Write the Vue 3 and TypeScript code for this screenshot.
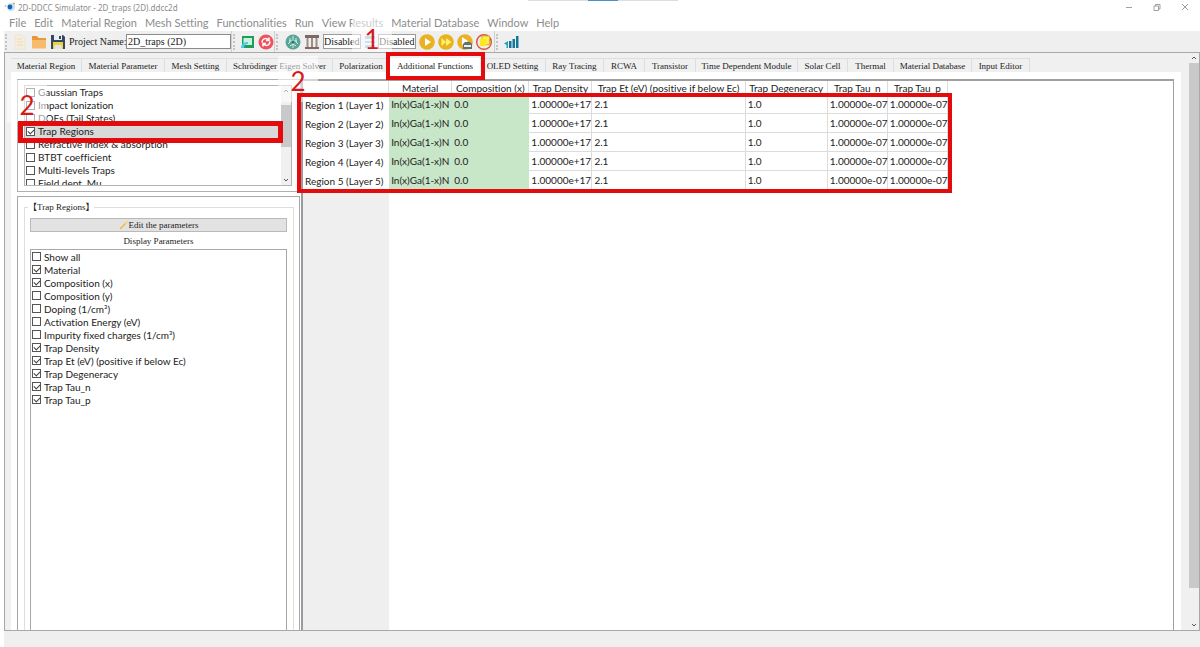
<script setup lang="ts">
import { ref } from 'vue'

interface CheckItem {
  label: string
  checked: boolean
}

const menus: string[] = [
  'File', 'Edit', 'Material Region', 'Mesh Setting', 'Functionalities',
  'Run', 'View Results', 'Material Database', 'Window', 'Help',
]

const tabs: string[] = [
  'Material Region', 'Material Parameter', 'Mesh Setting', 'Schrödinger Eigen Solver',
  'Polarization', 'Additional Functions', 'OLED Setting', 'Ray Tracing', 'RCWA',
  'Transistor', 'Time Dependent Module', 'Solar Cell', 'Thermal', 'Material Database',
  'Input Editor',
]
const activeTab = ref('Additional Functions')
const projectName = ref('2D_traps (2D)')

const features = ref<CheckItem[]>([
  { label: 'Gaussian Traps', checked: false },
  { label: 'Impact Ionization', checked: false },
  { label: 'DOEs (Tail States)', checked: false },
  { label: 'Trap Regions', checked: true },
  { label: 'Refractive index & absorption', checked: false },
  { label: 'BTBT coefficient', checked: false },
  { label: 'Multi-levels Traps', checked: false },
  { label: 'Field dept. Mu', checked: false },
])

const parameters = ref<CheckItem[]>([
  { label: 'Show all', checked: false },
  { label: 'Material', checked: true },
  { label: 'Composition (x)', checked: true },
  { label: 'Composition (y)', checked: false },
  { label: 'Doping (1/cm³)', checked: false },
  { label: 'Activation Energy (eV)', checked: false },
  { label: 'Impurity fixed charges (1/cm³)', checked: false },
  { label: 'Trap Density', checked: true },
  { label: 'Trap Et (eV) (positive if below Ec)', checked: true },
  { label: 'Trap Degeneracy', checked: true },
  { label: 'Trap Tau_n', checked: true },
  { label: 'Trap Tau_p', checked: true },
])

const columns: string[] = [
  'Material', 'Composition (x)', 'Trap Density', 'Trap Et (eV) (positive if below Ec)',
  'Trap Degeneracy', 'Trap Tau_n', 'Trap Tau_p',
]
const rows = [1, 2, 3, 4, 5].map((n) => ({
  name: `Region ${n} (Layer ${n})`,
  cells: ['In(x)Ga(1-x)N', '0.0', '1.00000e+17', '2.1', '1.0', '1.00000e-07', '1.00000e-07'],
}))
</script>

<template>
  <div class="window">
    <div class="top-handle"><i></i></div>
    <header class="titlebar">
      <svg class="app-icon" viewBox="0 0 12 12" aria-hidden="true">
        <circle cx="7" cy="6" r="4" fill="#bfe6f2" />
        <circle cx="6" cy="6" r="2.4" fill="#1d5fb4" />
        <circle cx="10" cy="2.5" r="1" fill="#e9a33c" />
        <circle cx="1.5" cy="5" r="1" fill="#b9c6d4" />
      </svg>
      <span class="title">2D-DDCC Simulator - 2D_traps (2D).ddcc2d</span>
      <div class="window-buttons">
        <button type="button" aria-label="Minimize">
          <svg viewBox="0 0 10 10"><path d="M2 5.500h6" /></svg>
        </button>
        <button type="button" aria-label="Restore">
          <svg viewBox="0 0 10 10"><path d="M2 4h4.500v4.500H2zM3.500 4V2.500H8V7H6.500" /></svg>
        </button>
        <button type="button" aria-label="Close">
          <svg viewBox="0 0 10 10"><path d="M2 2l6 6M8 2l-6 6" /></svg>
        </button>
      </div>
    </header>

    <nav class="menubar">
      <button v-for="m in menus" :key="m" type="button">{{ m }}</button>
    </nav>

    <div class="toolbar">
      <div class="group group-project">
        <button type="button" aria-label="New">
          <svg viewBox="0 0 16 16"><path d="M3 1h7l3 3v11H3z" fill="#f6eedb" stroke="#eee6d2" /><path d="M5 5h5M5 8h6M5 11h6" stroke="#e8dcc0" /></svg>
        </button>
        <button type="button" aria-label="Open">
          <svg viewBox="0 0 16 16"><path d="M1 2h5l1.500 2H15v10H1z" fill="#e8973a" /><path d="M1 6h14v8.500H1z" fill="#f8bb6c" /></svg>
        </button>
        <button type="button" aria-label="Save">
          <svg viewBox="0 0 16 16"><path d="M1 1h12l2 2v12H1z" fill="#34495e" /><path d="M4 1h8v5H4z" fill="#e8eef2" /><path d="M9 2h2v3H9z" fill="#34495e" /><path d="M3 8h10v7H3z" fill="#f0d13d" /><path d="M4.500 11h7v4h-7z" fill="#dfe6e8" /></svg>
        </button>
        <label for="project">Project Name:</label>
        <input id="project" v-model="projectName" type="text" />
      </div>
      <div class="group group-refresh">
        <button type="button" aria-label="Reload project">
          <svg viewBox="0 0 16 16"><path d="M3 2h12v12H3z" fill="#1f9d5c" /><path d="M4.500 4H13v7H4.500z" fill="#c9f2dd" /><path d="M2 14c0-4 3-6 7-6v2c-3 0-4 2-4 4z" fill="#4fc9e6" /></svg>
        </button>
        <button type="button" aria-label="Sync">
          <svg viewBox="0 0 16 16"><circle cx="8" cy="8" r="7.500" fill="#f0525c" /><path d="M4 8.500C4 5 7.500 3.500 10 5.500M12 7.500c0 3.500-3.500 5-6 3M8 6.500h3V3.500M8 9.500H5v3" fill="none" stroke="#fff" stroke-width="1.500" /></svg>
        </button>
      </div>
      <div class="group group-run">
        <button type="button" aria-label="Mesh">
          <svg viewBox="0 0 16 16"><circle cx="8" cy="8" r="7.500" fill="#58a596" /><path d="M8 2v12M5 4v4l-2 2M11 4v4l2 2M5 12l3-2 3 2M4 7h8" fill="none" stroke="#d3eee6" stroke-width="1" /><circle cx="8" cy="8" r="1.500" fill="#2d7568" /></svg>
        </button>
        <button type="button" aria-label="Structure">
          <svg viewBox="0 0 16 16"><path d="M1 1h14v3H1zM1 13h14v2H1z" fill="#7d6963" /><path d="M3.500 4v9M8 4v9M12.500 4v9" stroke="#a08d86" stroke-width="2" /></svg>
        </button>
        <select aria-label="Structure mode"><option>Disabled</option></select>
        <button class="layers" type="button" aria-label="Layers">
          <svg viewBox="0 0 16 16"><path d="M1 2h10v3H1zM1 7h10v2H1zM1 11h10v3H1z" fill="#8fb8df" /></svg>
        </button>
        <select aria-label="Layer mode"><option>Disabled</option></select>
        <button type="button" aria-label="Run">
          <svg viewBox="0 0 16 16"><circle cx="8" cy="8" r="7.800" fill="#eab222" /><path d="M6 4l6 4-6 4z" fill="#fff" /></svg>
        </button>
        <button type="button" aria-label="Run all">
          <svg viewBox="0 0 16 16"><circle cx="8" cy="8" r="7.800" fill="#eab222" /><path d="M3.500 4L8 8l-4.500 4zM8 4l5.500 4L8 12z" fill="#fff36a" /></svg>
        </button>
        <button type="button" aria-label="Run batch">
          <svg viewBox="0 0 16 16"><circle cx="8" cy="8" r="7.800" fill="#eab222" /><path d="M5 3l6 4-6 4z" fill="#fff" /><path d="M6 10l2-2h5l2 2v5H6z" fill="#63706c" /><path d="M7 11h7v2H7z" fill="#e9eeee" /></svg>
        </button>
        <button type="button" aria-label="Stop">
          <svg viewBox="0 0 16 16"><circle cx="8" cy="8" r="7.300" fill="#f3e8e2" stroke="#d8523c" stroke-width="1.400" /><path d="M6 2h7.500v8.500H6z" fill="#fff04a" stroke="#e3a92a" /><path d="M4 5h6.500v7H4z" fill="#fbea1e" /></svg>
        </button>
      </div>
      <div class="group group-chart">
        <button type="button" aria-label="Plot">
          <svg viewBox="0 0 16 16"><path d="M5 7h2.500v7H5zM8.500 5H11v9H8.500zM12 2h2.500v12H12z" fill="#12789a" /><path d="M0 9.500l4-2.500v7H2.500v-3z" fill="#1fa5b8" /></svg>
        </button>
      </div>
    </div>

    <main class="workspace">
      <div class="workspace-body">
        <div class="tabs" role="tablist">
          <button
            v-for="t in tabs" :key="t" type="button" role="tab"
            :class="{ active: t === activeTab }" :aria-selected="t === activeTab"
            @click="activeTab = t"
          >{{ t }}</button>
        </div>

        <div class="page">
          <aside class="sidebar">
            <section class="feature-panel">
              <div class="feature-list">
                <div class="items">
                  <label v-for="f in features" :key="f.label" :class="{ selected: f.label === 'Trap Regions' }">
                    <input v-model="f.checked" type="checkbox" />{{ f.label }}
                  </label>
                </div>
                <div class="scroll">
                  <svg viewBox="0 0 10 10"><path d="M3 6l2-2 2 2" /></svg>
                  <i class="thumb"></i>
                  <svg viewBox="0 0 10 10"><path d="M3 4l2 2 2-2" /></svg>
                </div>
                <span class="row-highlight"></span>
              </div>
            </section>

            <section class="param-panel">
              <fieldset>
                <legend>【Trap Regions】</legend>
                <button class="edit" type="button">
                  <svg viewBox="0 0 10 10"><path d="M1 9l6-6" stroke="#f0b93a" stroke-width="1.500" /><path d="M6.500 3.500L9 1" stroke="#f5d98a" stroke-width="2" /></svg>
                  Edit the parameters
                </button>
                <p>Display Parameters</p>
                <div class="param-list">
                  <label v-for="p in parameters" :key="p.label">
                    <input v-model="p.checked" type="checkbox" />{{ p.label }}
                  </label>
                </div>
              </fieldset>
            </section>
          </aside>

          <section class="grid-view">
            <div class="grid-wrap">
              <table>
                <colgroup>
                  <col class="c-head" /><col class="c-mat" /><col class="c-comp" /><col class="c-dens" />
                  <col class="c-et" /><col class="c-deg" /><col class="c-tau" /><col class="c-tau" />
                </colgroup>
                <thead>
                  <tr>
                    <td></td>
                    <th v-for="c in columns" :key="c" scope="col">{{ c }}</th>
                  </tr>
                </thead>
                <tbody>
                  <tr v-for="r in rows" :key="r.name">
                    <th scope="row">{{ r.name }}</th>
                    <td v-for="(c, i) in r.cells" :key="i" :class="{ green: i < 2 }">{{ c }}</td>
                  </tr>
                </tbody>
              </table>
              <span class="grid-highlight"></span>
            </div>
            <div class="gutter"></div>
          </section>
        </div>
      </div>

      <div class="scroll main-scroll">
        <svg viewBox="0 0 10 10"><path d="M3 6l2-2 2 2" /></svg>
        <i class="thumb"></i>
        <svg viewBox="0 0 10 10"><path d="M3 4l2 2 2-2" /></svg>
      </div>
    </main>
    <footer class="statusbar"></footer>

    <span class="marker marker-tab">1</span>
    <span class="marker marker-table">2</span>
    <span class="marker marker-list">2</span>
  </div>
</template>

<style>
html,
body {
  margin: 0;
  background: #fff;
}
</style>

<style scoped>
* {
  box-sizing: border-box;
}
.window {
  position: relative;
  display: flex;
  flex-direction: column;
  height: 100vh;
  overflow: hidden;
  background: #fff;
  color: #222;
  font: 10px/13px Lato, "Open Sans", sans-serif;
}
.window,
.menubar,
.menubar button,
.param-list {
  font-variant-ligatures: none;
}
button {
  margin: 0;
  padding: 0;
  border: 0;
  background: none;
  color: inherit;
  font: inherit;
  white-space: nowrap;
}
svg {
  display: block;
  flex: none;
}
.top-handle {
  position: absolute;
  top: 0;
  left: 44%;
  width: 150px;
  border-top: 1px solid #ddd;
}
.top-handle i {
  position: absolute;
  top: -1px;
  left: 60px;
  width: 30px;
  height: 1px;
  background: #4a90c8;
}
.titlebar {
  display: flex;
  align-items: center;
  height: 14px;
  padding: 0 4px;
  color: #8c8c8c;
  font-size: 8px;
  font-family: "Noto Sans", sans-serif;
}
.app-icon {
  width: 12px;
  height: 12px;
  margin-right: 2px;
}
.window-buttons {
  display: flex;
  gap: 18px;
  margin-left: auto;
  padding-right: 6px;
}
.window-buttons svg {
  width: 10px;
  height: 10px;
  fill: none;
  stroke: #a0a0a0;
}
.menubar {
  display: flex;
  gap: 8px;
  height: 17px;
  padding-left: 9px;
  color: #8c8c8c;
  font-size: 11px;
  line-height: 17px;
}
.toolbar {
  display: flex;
  height: 21px;
  margin-left: 4px;
  background: #efefef;
  font: 10px/13px "Liberation Serif", serif;
}
.group {
  display: flex;
  align-items: center;
  border-right: 1px solid #cfcfcf;
}
.group::before {
  width: 2px;
  height: 16px;
  margin: 0 4px 0 1px;
  border-left: 2px dotted #c4c4c4;
  content: "";
}
.group svg {
  width: 16px;
  height: 16px;
}
.group-project {
  width: 228px;
}
.group-project button {
  margin-right: 3px;
}
.group-project label {
  width: 57px;
  white-space: nowrap;
}
.group-project input {
  width: 105px;
  height: 15px;
  padding: 0 1px;
  border: 1px solid #8b8b8b;
  border-radius: 0;
  background: #fff;
  color: #222;
  font: inherit;
}
.group-refresh {
  width: 43px;
  gap: 3px;
}
.group-refresh::before {
  margin-right: 0;
}
.group-run {
  width: 220px;
  gap: 3px;
}
.group-run::before {
  margin-right: 2px;
}
.group-run select {
  width: 38px;
  height: 15px;
  padding: 0;
  border: 1px solid #9a9a9a;
  border-radius: 0;
  background: #fff;
  color: #222;
  font: inherit;
  appearance: none;
}
.group-run .layers {
  width: 11px;
  overflow: hidden;
}
.group-chart {
  border: 0;
}
.workspace {
  display: flex;
  flex: 1;
  min-height: 0;
  margin-left: 4px;
  border: 1px solid #a8a8a8;
  background: #f0f0f0;
}
.workspace-body {
  display: flex;
  flex: 1;
  flex-direction: column;
  min-width: 0;
  padding: 5px 8px 0 6px;
}
.tabs {
  display: grid;
  grid-template-columns: 71px 83px 62px 106px 57px 90px 66px 58px 41px 51px 102px 50px 46px 78px 58px;
  height: 14px;
  font: 9px/14px "Liberation Serif", serif;
}
.tabs button {
  border: 1px solid #dedede;
  border-width: 1px 1px 0 0;
  line-height: 14px;
}
.tabs .active {
  position: relative;
  border: 0;
  background: #fff;
}
.tabs .active::after {
  position: absolute;
  z-index: 3;
  inset: -6px -5px -7px -4px;
  border: 4px solid #e30b0b;
  content: "";
}
.page {
  display: flex;
  flex: 1;
  min-height: 0;
  padding: 7px 7px 0 6px;
  background: #fff;
}
.sidebar {
  display: flex;
  flex: none;
  flex-direction: column;
  gap: 4px;
  width: 286px;
  border-right: 2px solid #9a9aa0;
}
.feature-panel {
  height: 113px;
  padding: 5px 8px 5px 6px;
  border: 1px solid #b0b0b0;
}
.feature-list {
  position: relative;
  display: flex;
  height: 101px;
  border: 1px solid #b4b4b4;
}
.items {
  flex: 1;
  overflow: hidden;
}
.items label,
.param-list label {
  display: flex;
  align-items: center;
  gap: 3px;
  height: 13px;
  padding-left: 1px;
  white-space: nowrap;
}
.items .selected {
  background: #d9d9d9;
}
input[type="checkbox"] {
  position: relative;
  width: 9px;
  height: 9px;
  margin: 0;
  border: 1px solid #555;
  background: #fff;
  appearance: none;
}
input[type="checkbox"]:checked::after {
  position: absolute;
  top: 1px;
  left: 1px;
  width: 5px;
  height: 3px;
  border: solid #444;
  border-width: 0 0 1px 1px;
  transform: rotate(-45deg);
  content: "";
}
.row-highlight {
  position: absolute;
  z-index: 3;
  top: 35px;
  right: 8px;
  left: -7px;
  height: 22px;
  border: 5px solid #e30b0b;
}
.scroll {
  display: flex;
  flex: none;
  flex-direction: column;
  justify-content: space-between;
  width: 10px;
  background: #f0f0f0;
}
.scroll svg {
  width: 10px;
  height: 10px;
  fill: none;
  stroke: #555;
}
.scroll .thumb {
  height: 42px;
  margin-bottom: 20px;
  background: #c9c9c9;
}
.main-scroll .thumb {
  flex: 1;
  margin-bottom: 32px;
}
.param-panel {
  flex: 1;
  min-height: 0;
  width: 283px;
  padding: 4px 5px 0 6px;
  border: 1px solid #a8a8a8;
  border-bottom: 0;
  font: 9px/12px "Liberation Serif", serif;
}
fieldset {
  display: flex;
  flex-direction: column;
  height: 100%;
  min-width: 0;
  margin: 0;
  padding: 5px 6px 0 5px;
  border: 1px solid #dedede;
  border-bottom: 0;
}
legend {
  margin-left: -2px;
  padding: 0;
  font-family: "Liberation Serif", "Noto Sans CJK TC", serif;
}
.edit {
  display: flex;
  flex: none;
  align-items: center;
  justify-content: center;
  height: 14px;
  border: 1px solid #b9b9b9;
  background: #e2e2e2;
}
.edit svg {
  width: 10px;
  height: 10px;
}
fieldset p {
  margin: 3px 0 2px;
  text-align: center;
}
.param-list {
  flex: 1;
  border: 1px solid #a8a8a8;
  border-bottom: 0;
  font-size: 10px;
  font-family: Lato, "Open Sans", sans-serif;
}
.grid-view {
  display: flex;
  flex: 1;
  flex-direction: column;
  min-width: 0;
  border: solid #a0a0a0;
  border-width: 2px 1px 0 0;
}
.grid-wrap {
  position: relative;
  width: 645px;
}
table {
  width: 645px;
  border-spacing: 0;
  table-layout: fixed;
}
.c-head { width: 86px; }
.c-mat { width: 63px; }
.c-comp { width: 77px; }
.c-dens { width: 63px; }
.c-et { width: 153px; }
.c-deg { width: 82px; }
.c-tau { width: 60px; }
th,
td {
  height: 19px;
  padding: 1px 0 0 2px;
  border: solid #dcdcdc;
  border-width: 0 1px 1px 0;
  font-weight: 400;
  text-align: left;
  white-space: nowrap;
}
thead th,
thead td {
  height: 14px;
  padding: 0;
  border-bottom: 0;
  text-align: center;
}
tbody th {
  border: 0;
}
.green {
  border-color: #c8e6c8;
  background: #c8e6c8;
}
.grid-highlight {
  position: absolute;
  z-index: 3;
  inset: 12px -4px -3px -6px;
  border: 4px solid #e30b0b;
}
.gutter {
  flex: 1;
  width: 86px;
  background: #efefef;
}
.statusbar {
  height: 16px;
  margin-left: 4px;
  background: #efefef;
}
.marker {
  position: absolute;
  z-index: 2;
  width: 40px;
  height: 46px;
  background: rgba(255, 255, 255, 0.55);
  color: #d51a1a;
  font: 26px/50px Lato, sans-serif;
  text-align: center;
}
.marker-tab {
  top: 14px;
  left: 352px;
  height: 38px;
}
.marker-table {
  top: 56px;
  left: 278px;
}
.marker-list {
  top: 80px;
  left: 7px;
  height: 42px;
}
</style>
